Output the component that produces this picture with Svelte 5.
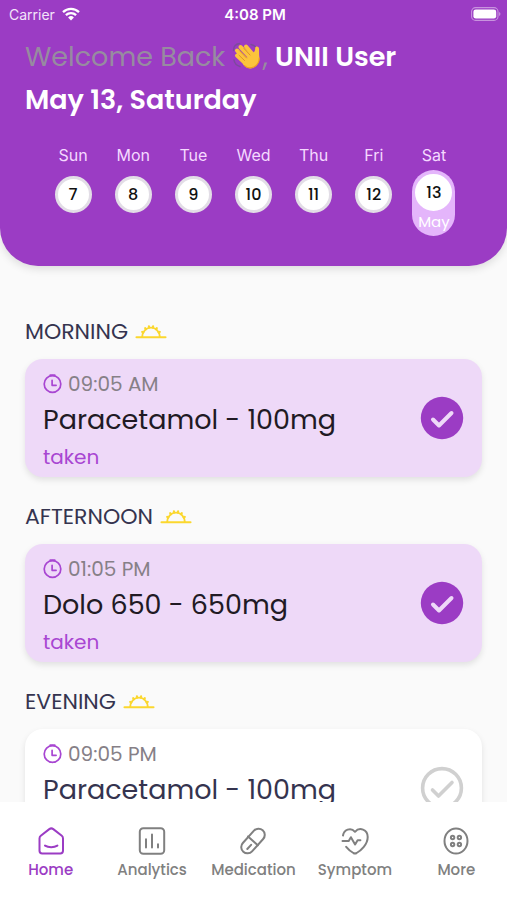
<script lang="ts">
  type Dose = {
    period: string;
    time: string;
    name: string;
    taken: boolean;
  };

  const days = [
    { label: 'Sun', date: 7 },
    { label: 'Mon', date: 8 },
    { label: 'Tue', date: 9 },
    { label: 'Wed', date: 10 },
    { label: 'Thu', date: 11 },
    { label: 'Fri', date: 12 },
    { label: 'Sat', date: 13 },
  ];

  const tabs = [
    { id: 'home', label: 'Home' },
    { id: 'analytics', label: 'Analytics' },
    { id: 'medication', label: 'Medication' },
    { id: 'symptom', label: 'Symptom' },
    { id: 'more', label: 'More' },
  ];

  let selected = $state(13);
  let activeTab = $state('home');
  let doses = $state<Dose[]>([
    { period: 'MORNING', time: '09:05 AM', name: 'Paracetamol - 100mg', taken: true },
    { period: 'AFTERNOON', time: '01:05 PM', name: 'Dolo 650 - 650mg', taken: true },
    { period: 'EVENING', time: '09:05 PM', name: 'Paracetamol - 100mg', taken: false },
  ]);
</script>

<div class="app">
  <header>
    <div class="status-bar">
      <span class="carrier">
        Carrier
        <svg width="18" height="14" viewBox="0 0 18 14" aria-hidden="true">
          <g fill="none" stroke="#fff" stroke-width="2.3">
            <path d="M1 5.1a11.6 11.6 0 0 1 16 0" />
            <path d="M3.9 8.2a7.4 7.4 0 0 1 10.2 0" />
          </g>
          <path d="M9 13.4 6.1 10.4a4.2 4.2 0 0 1 5.8 0z" fill="#fff" />
        </svg>
      </span>
      <span class="clock">4:08 PM</span>
      <svg class="battery" width="30" height="14" viewBox="0 0 30 14" aria-hidden="true">
        <rect x=".6" y=".6" width="26.4" height="12.8" rx="4" fill="none" stroke="#fff" stroke-opacity=".45" stroke-width="1.1" />
        <rect x="2.4" y="2.4" width="22.8" height="9.2" rx="2.4" fill="#fff" />
        <path d="M28.2 5v4c1.6-.7 1.6-3.3 0-4z" fill="#fff" fill-opacity=".5" />
      </svg>
    </div>

    <div class="greeting">
      <p>
        <span class="muted">Welcome Back</span>
        <svg class="wave" width="30" height="30" viewBox="0 0 30 30" aria-hidden="true">
          <path d="M1.5 9.5C1.5 5.5 4 3 7.5 2.5M19 3.5c3 .5 5 2 6 5M2 19c.5 3.5 2.5 5.5 6 6.5" fill="none" stroke="#7c4a9c" stroke-width="1.5" stroke-linecap="round" />
          <path d="M5 14.5 13 22M5 9.500 14.5 19M8.5 6 17.5 15.5M14 5.500 20.5 13" fill="none" stroke="#fcc43c" stroke-width="4" stroke-linecap="round" />
          <path d="M10 20.5 21.5 11.500c1.2-1 1.7-2 1.7-4.5.1-2.2 3.6-2 3.8.5.2 3-.1 5.5.3 8.5.4 4-1 7.5-4.3 9.800-4.5 3-8.5 1.500-11.5-1.700z" fill="#fcc43c" />
          <path d="M7 14.2 12.5 19.5M7.5 9.700 14.5 17M12 7.500 18 14" fill="none" stroke="#d9861f" stroke-width=".8" stroke-linecap="round" />
          <path d="M27.2 17c.2 4-2 7-5 8.800-3.600 2-7 1.200-9.700-1.200" fill="none" stroke="#ef9d24" stroke-width="1.2" stroke-linecap="round" />
        </svg><span class="muted">,</span>
        <strong>UNII User</strong>
      </p>
      <h1>May 13, Saturday</h1>
    </div>

    <div class="week">
      {#each days as day}
        <div class="day">
          <span class="weekday" id={`day-${day.date}`}>{day.label}</span>
          <button
            class="pill"
            class:selected={selected === day.date}
            aria-describedby={`day-${day.date}`}
            onclick={() => (selected = day.date)}
          >
            <span class="date">{day.date}</span>
            {#if selected === day.date}
              <span class="month">May</span>
            {/if}
          </button>
        </div>
      {/each}
    </div>
  </header>

  <main>
    {#each doses as dose}
      <section>
        <h2>
          {dose.period}
          <svg width="32" height="16" viewBox="0 0 32 16" aria-hidden="true" fill="none" stroke="#fbd72e" stroke-linecap="round">
            <path d="M1.500 13.200h29" stroke-width="2.1" />
            <path d="M7.200 12.800a8.800 9.200 0 0 1 17.600 0" stroke-width="1.9" />
            <path d="M7.200 7.800 8.200 8.500M10.200 4.200 10.900 5.200M13.900 2.300 14.200 3.500M18.100 2.300 17.800 3.500M21.800 4.200 21.100 5.200M24.800 7.800 23.800 8.500" stroke-width="2.2" />
          </svg>
        </h2>
        <div class="card" class:taken={dose.taken}>
          <div class="details">
            <div class="time">
              <svg width="20" height="20" viewBox="0 0 20 20" aria-hidden="true" fill="none" stroke="#a846d2" stroke-width="1.7" stroke-linecap="round" stroke-linejoin="round">
                <circle cx="9.500" cy="10" r="8.300" />
                <path d="M7.300 1.300h4.400" stroke-width="2" />
                <path d="M9.100 6.300v5h4" />
              </svg>
              {dose.time}
            </div>
            <div class="name">{dose.name}</div>
            <div class="state">{dose.taken ? 'taken' : ''}</div>
          </div>
          <button
            class="check"
            aria-pressed={dose.taken}
            aria-label={`Mark ${dose.name} as taken`}
            onclick={() => (dose.taken = !dose.taken)}
          >
            <svg width="44" height="44" viewBox="0 0 44 44" aria-hidden="true" fill="none" stroke-linecap="round" stroke-linejoin="round">
              {#if dose.taken}
                <circle cx="22" cy="22" r="21.2" fill="#9b3cc4" />
                <path d="M13 23.500l6 6L31.500 17" stroke="#eed9f8" stroke-width="4" />
              {:else}
                <circle cx="22" cy="22" r="19.4" stroke="#d0d0d0" stroke-width="3.6" />
                <path d="M12.500 24l6 6L32 16.500" stroke="#d0d0d0" stroke-width="3.6" />
              {/if}
            </svg>
          </button>
        </div>
      </section>
    {/each}
  </main>

  <nav>
    {#each tabs as tab}
      <button class:active={activeTab === tab.id} onclick={() => (activeTab = tab.id)}>
        <svg width="28" height="28" viewBox="0 0 28 28" aria-hidden="true" fill="none" stroke="currentColor" stroke-width="2" stroke-linecap="round" stroke-linejoin="round">
          {#if tab.id === 'home'}
            <path d="M2.500 11.500c0-1.200.4-2 1.300-2.700l8.500-6.700c1.400-1 2.600-1 4 0l8.500 6.700c.9.700 1.200 1.500 1.200 2.700v12.300a2.700 2.700 0 0 1-2.700 2.700H5.200a2.700 2.700 0 0 1-2.700-2.700z" />
            <path d="M8 18.600c3.400 2.200 9 2.200 12.400 0" />
          {:else if tab.id === 'analytics'}
            <rect x="1.8" y="1.2" width="24.4" height="25.6" rx="3.5" />
            <path d="M8 12.200v8.300M14 7.500v13M20 17.200v3.300" />
          {:else if tab.id === 'medication'}
            <rect x="7.8" y="-.5" width="12.4" height="29" rx="6.2" transform="rotate(42 14 14)" />
            <path d="M9 9.500 18.800 18.300M8.300 22l3.800-4.200" />
          {:else if tab.id === 'symptom'}
            <path d="M2 8.500C2.800 3.200 9.500-.5 14 4.800c4.500-5.300 12.700-2.300 12.700 5.200 0 7.500-6.700 13.500-11.100 16-1.200.6-2 .6-3.200 0-2.400-1.400-5-3.500-7.200-6.200" />
            <path d="M1.500 14h6.200l2.200-3.800 4.200 7.200 2.500-4.200h2.800" />
          {:else}
            <ellipse cx="14" cy="14" rx="11.5" ry="12.5" />
            <circle cx="10.6" cy="10.5" r="1.7" />
            <circle cx="17.4" cy="10.5" r="1.7" />
            <circle cx="10.6" cy="17.5" r="1.7" />
            <circle cx="17.4" cy="17.5" r="1.7" />
          {/if}
        </svg>
        <span>{tab.label}</span>
      </button>
    {/each}
  </nav>
</div>

<style>
  :global(body) {
    margin: 0;
    background: #fafafa;
  }
  button {
    padding: 0;
    border: none;
    background: none;
    font: inherit;
    color: inherit;
    cursor: pointer;
  }
  svg { flex: none; }
  .app {
    display: flex;
    flex-direction: column;
    height: 100vh;
    font-family: Poppins, Inter, 'Open Sans', sans-serif;
    color: #35344f;
  }

  header {
    flex: none;
    padding-bottom: 30px;
    border-radius: 0 0 38px 38px;
    background: #9b3cc4;
    box-shadow: 0 3px 8px rgba(0, 0, 0, 0.12);
    color: #fff;
  }
  .status-bar {
    display: grid;
    grid-template-columns: 1fr auto 1fr;
    align-items: center;
    height: 28px;
    padding: 0 6px 0 9px;
    font-family: Inter, sans-serif;
    font-size: 14px;
  }
  .carrier {
    display: flex;
    align-items: center;
    gap: 7px;
    color: #f3e4fa;
  }
  .clock {
    font-size: 15px;
    font-weight: 600;
  }
  .battery { justify-self: end; }

  .greeting {
    padding: 7px 25px 0;
    font-size: 27px;
    line-height: 43px;
  }
  .greeting p { margin: 0; }
  .greeting strong { font-weight: 600; }
  .greeting h1 {
    margin: 0;
    font-size: 27px;
    font-weight: 600;
  }
  .muted { color: #978ba0; }
  .wave { vertical-align: -5px; }

  .week {
    display: grid;
    grid-template-columns: repeat(7, 1fr);
    margin: 22px 43px 0;
  }
  .day {
    display: flex;
    flex-direction: column;
    align-items: center;
    gap: 3px;
  }
  .weekday {
    font-family: Inter, sans-serif;
    font-size: 16px;
    line-height: 24px;
    color: #f5d9ff;
  }
  .pill {
    display: flex;
    flex-direction: column;
    align-items: center;
    box-sizing: border-box;
    width: 43px;
    height: 66px;
    padding-top: 6px;
    border-radius: 22px;
  }
  .date {
    box-sizing: border-box;
    width: 37px;
    border: 3px solid #e2dde6;
    border-radius: 50%;
    background: #fff;
    font-size: 16px;
    font-weight: 500;
    line-height: 31px;
    color: #111;
  }
  .selected {
    padding-top: 4px;
    background: #e4b5fb;
  }
  .selected .date { border-color: #fff; }
  .month {
    font-size: 15px;
    line-height: 22px;
    color: #fff;
  }

  main {
    flex: 1;
    min-height: 0;
    padding: 46px 25px 0;
    overflow-y: auto;
    scrollbar-width: none;
  }
  section { margin-bottom: 20px; }
  h2 {
    display: flex;
    align-items: center;
    gap: 7px;
    margin: 0 0 8px;
    font-size: 22px;
    font-weight: 400;
    line-height: 39px;
  }
  .card {
    display: flex;
    align-items: center;
    justify-content: space-between;
    padding: 8px 18px;
    border-radius: 18px;
    background: #fff;
    box-shadow: 0 3px 6px rgba(0, 0, 0, 0.1);
  }
  .card.taken { background: #eed9f8; }
  .time {
    display: flex;
    align-items: center;
    gap: 5px;
    font-size: 20px;
    line-height: 34px;
    color: #868087;
  }
  .name {
    font-size: 27px;
    line-height: 37px;
  }
  .taken .name { color: #211a24; }
  .state {
    height: 31px;
    font-size: 20px;
    line-height: 38px;
    color: #a846d2;
  }
  .check svg { display: block; }

  nav {
    flex: none;
    display: grid;
    grid-template-columns: repeat(5, 1fr);
    height: 98px;
    background: #fff;
  }
  nav button {
    display: flex;
    flex-direction: column;
    align-items: center;
    gap: 4px;
    padding-top: 25px;
    font-size: 15px;
    font-weight: 500;
    line-height: 22px;
    color: #808080;
  }
  nav .active { color: #9b3cc4; }
</style>
